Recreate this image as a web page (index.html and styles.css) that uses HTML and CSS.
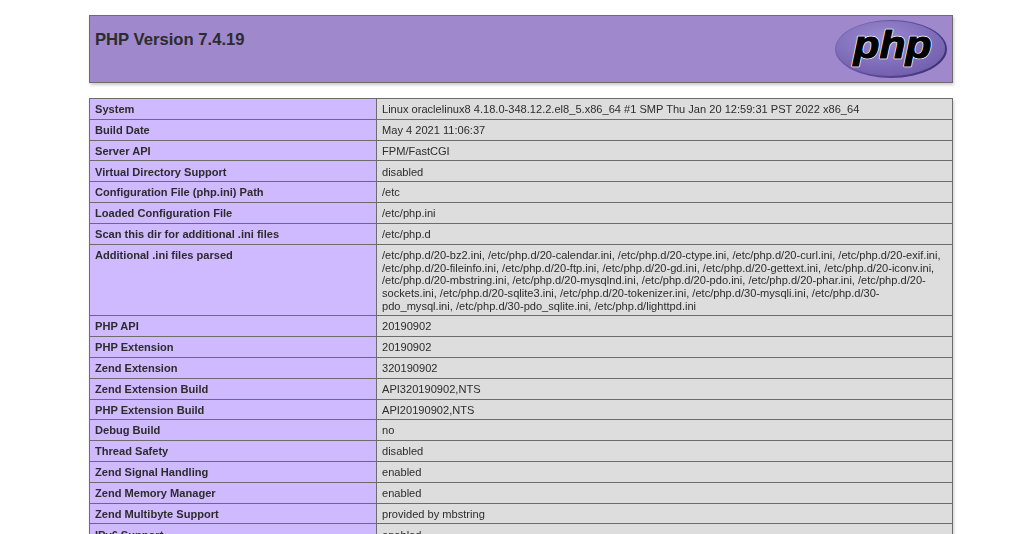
FILE: index.html
```html
<!DOCTYPE html>
<html lang="en">
<head>
<meta charset="utf-8">
<title>PHP 7.4.19 - phpinfo()</title>
<link rel="stylesheet" href="styles.css">
</head>
<body>
<div class="center">
<table class="head-table">
<tr class="h"><td class="h-cell">
<div class="h-inner">
<h1 class="p">PHP Version 7.4.19</h1>
<svg class="logo" viewBox="0 0 112 58" width="112" height="58" aria-label="PHP logo">
<defs>
<radialGradient id="egg" cx="42%" cy="32%" r="75%">
<stop offset="0" stop-color="#9a8bd0"/>
<stop offset="0.65" stop-color="#7e6cb8"/>
<stop offset="1" stop-color="#6f5cac"/>
</radialGradient>
<linearGradient id="rim" x1="0" y1="0.2" x2="1" y2="0.6">
<stop offset="0" stop-color="#7a68b6"/>
<stop offset="0.55" stop-color="#5a4a9a"/>
<stop offset="1" stop-color="#3f3278"/>
</linearGradient>
<text id="php-word" class="logo-text" x="18.5" y="38" textLength="78" lengthAdjust="spacingAndGlyphs">php</text>
</defs>
<ellipse cx="56" cy="29" rx="56" ry="29" fill="url(#rim)"/>
<ellipse cx="55.5" cy="28.5" rx="54.5" ry="27.5" fill="url(#egg)"/>
<use href="#php-word" class="logo-halo"/>
<use href="#php-word" class="logo-ink"/>
</svg>
</div>
</td></tr>
</table>
<table class="info">
<tr><td class="e">System</td><td class="v">Linux oraclelinux8 4.18.0-348.12.2.el8_5.x86_64 #1 SMP Thu Jan 20 12:59:31 PST 2022 x86_64</td></tr>
<tr><td class="e">Build Date</td><td class="v">May 4 2021 11:06:37</td></tr>
<tr><td class="e">Server API</td><td class="v">FPM/FastCGI</td></tr>
<tr><td class="e">Virtual Directory Support</td><td class="v">disabled</td></tr>
<tr><td class="e">Configuration File (php.ini) Path</td><td class="v">/etc</td></tr>
<tr><td class="e">Loaded Configuration File</td><td class="v">/etc/php.ini</td></tr>
<tr><td class="e">Scan this dir for additional .ini files</td><td class="v">/etc/php.d</td></tr>
<tr><td class="e">Additional .ini files parsed</td><td class="v">/etc/php.d/20-bz2.ini, /etc/php.d/20-calendar.ini, /etc/php.d/20-ctype.ini, /etc/php.d/20-curl.ini, /etc/php.d/20-exif.ini, /etc/php.d/20-fileinfo.ini, /etc/php.d/20-ftp.ini, /etc/php.d/20-gd.ini, /etc/php.d/20-gettext.ini, /etc/php.d/20-iconv.ini, /etc/php.d/20-mbstring.ini, /etc/php.d/20-mysqlnd.ini, /etc/php.d/20-pdo.ini, /etc/php.d/20-phar.ini, /etc/php.d/20-sockets.ini, /etc/php.d/20-sqlite3.ini, /etc/php.d/20-tokenizer.ini, /etc/php.d/30-mysqli.ini, /etc/php.d/30-pdo_mysql.ini, /etc/php.d/30-pdo_sqlite.ini, /etc/php.d/lighttpd.ini</td></tr>
<tr><td class="e">PHP API</td><td class="v">20190902</td></tr>
<tr><td class="e">PHP Extension</td><td class="v">20190902</td></tr>
<tr><td class="e">Zend Extension</td><td class="v">320190902</td></tr>
<tr><td class="e">Zend Extension Build</td><td class="v">API320190902,NTS</td></tr>
<tr><td class="e">PHP Extension Build</td><td class="v">API20190902,NTS</td></tr>
<tr><td class="e">Debug Build</td><td class="v">no</td></tr>
<tr><td class="e">Thread Safety</td><td class="v">disabled</td></tr>
<tr><td class="e">Zend Signal Handling</td><td class="v">enabled</td></tr>
<tr><td class="e">Zend Memory Manager</td><td class="v">enabled</td></tr>
<tr><td class="e">Zend Multibyte Support</td><td class="v">provided by mbstring</td></tr>
<tr><td class="e">IPv6 Support</td><td class="v">enabled</td></tr>
</table>
</div>
</body>
</html>
```
FILE: styles.css
```css
html, body { margin: 0; padding: 0; background: #fff; height: 534px; overflow: hidden; }
body { color: #222; font-family: "Liberation Sans", Arial, sans-serif; }
.center { width: 864px; margin: 0 0 0 89px; padding-top: 15px; filter: blur(0.55px); }
table { border-collapse: collapse; border: 0; width: 864px; box-shadow: 1px 2px 3px #ccc; table-layout: fixed; }
td { border: 1px solid #6c6c6c; font-size: 11.08px; line-height: 12.64px; vertical-align: baseline; padding: 4.15px 5px 3.06px; overflow-wrap: anywhere; color: #2c2c2c; }
.head-table { margin-bottom: 15px; }
.h-cell { background-color: #9f88cb; padding: 4px 5px; height: 58px; vertical-align: top; }
.h-inner { display: flex; justify-content: space-between; align-items: flex-start; }
.p { margin: 10px 0 0; font-size: 16.65px; line-height: 20px; font-weight: bold; text-align: left; }
.logo { display: block; margin: 0; flex: none; }
.logo-text { font-family: "Liberation Sans", sans-serif; font-weight: bold; font-style: italic; font-size: 38px; }
.logo-halo { fill: #fff; stroke: #fff; stroke-width: 2.4px; stroke-linejoin: round; }
.logo-ink { fill: #000; stroke: #000; stroke-width: 1.1px; }
.e { background: #d0baff; width: 276px; font-weight: bold; }
.v { background: #ddd; }
```
